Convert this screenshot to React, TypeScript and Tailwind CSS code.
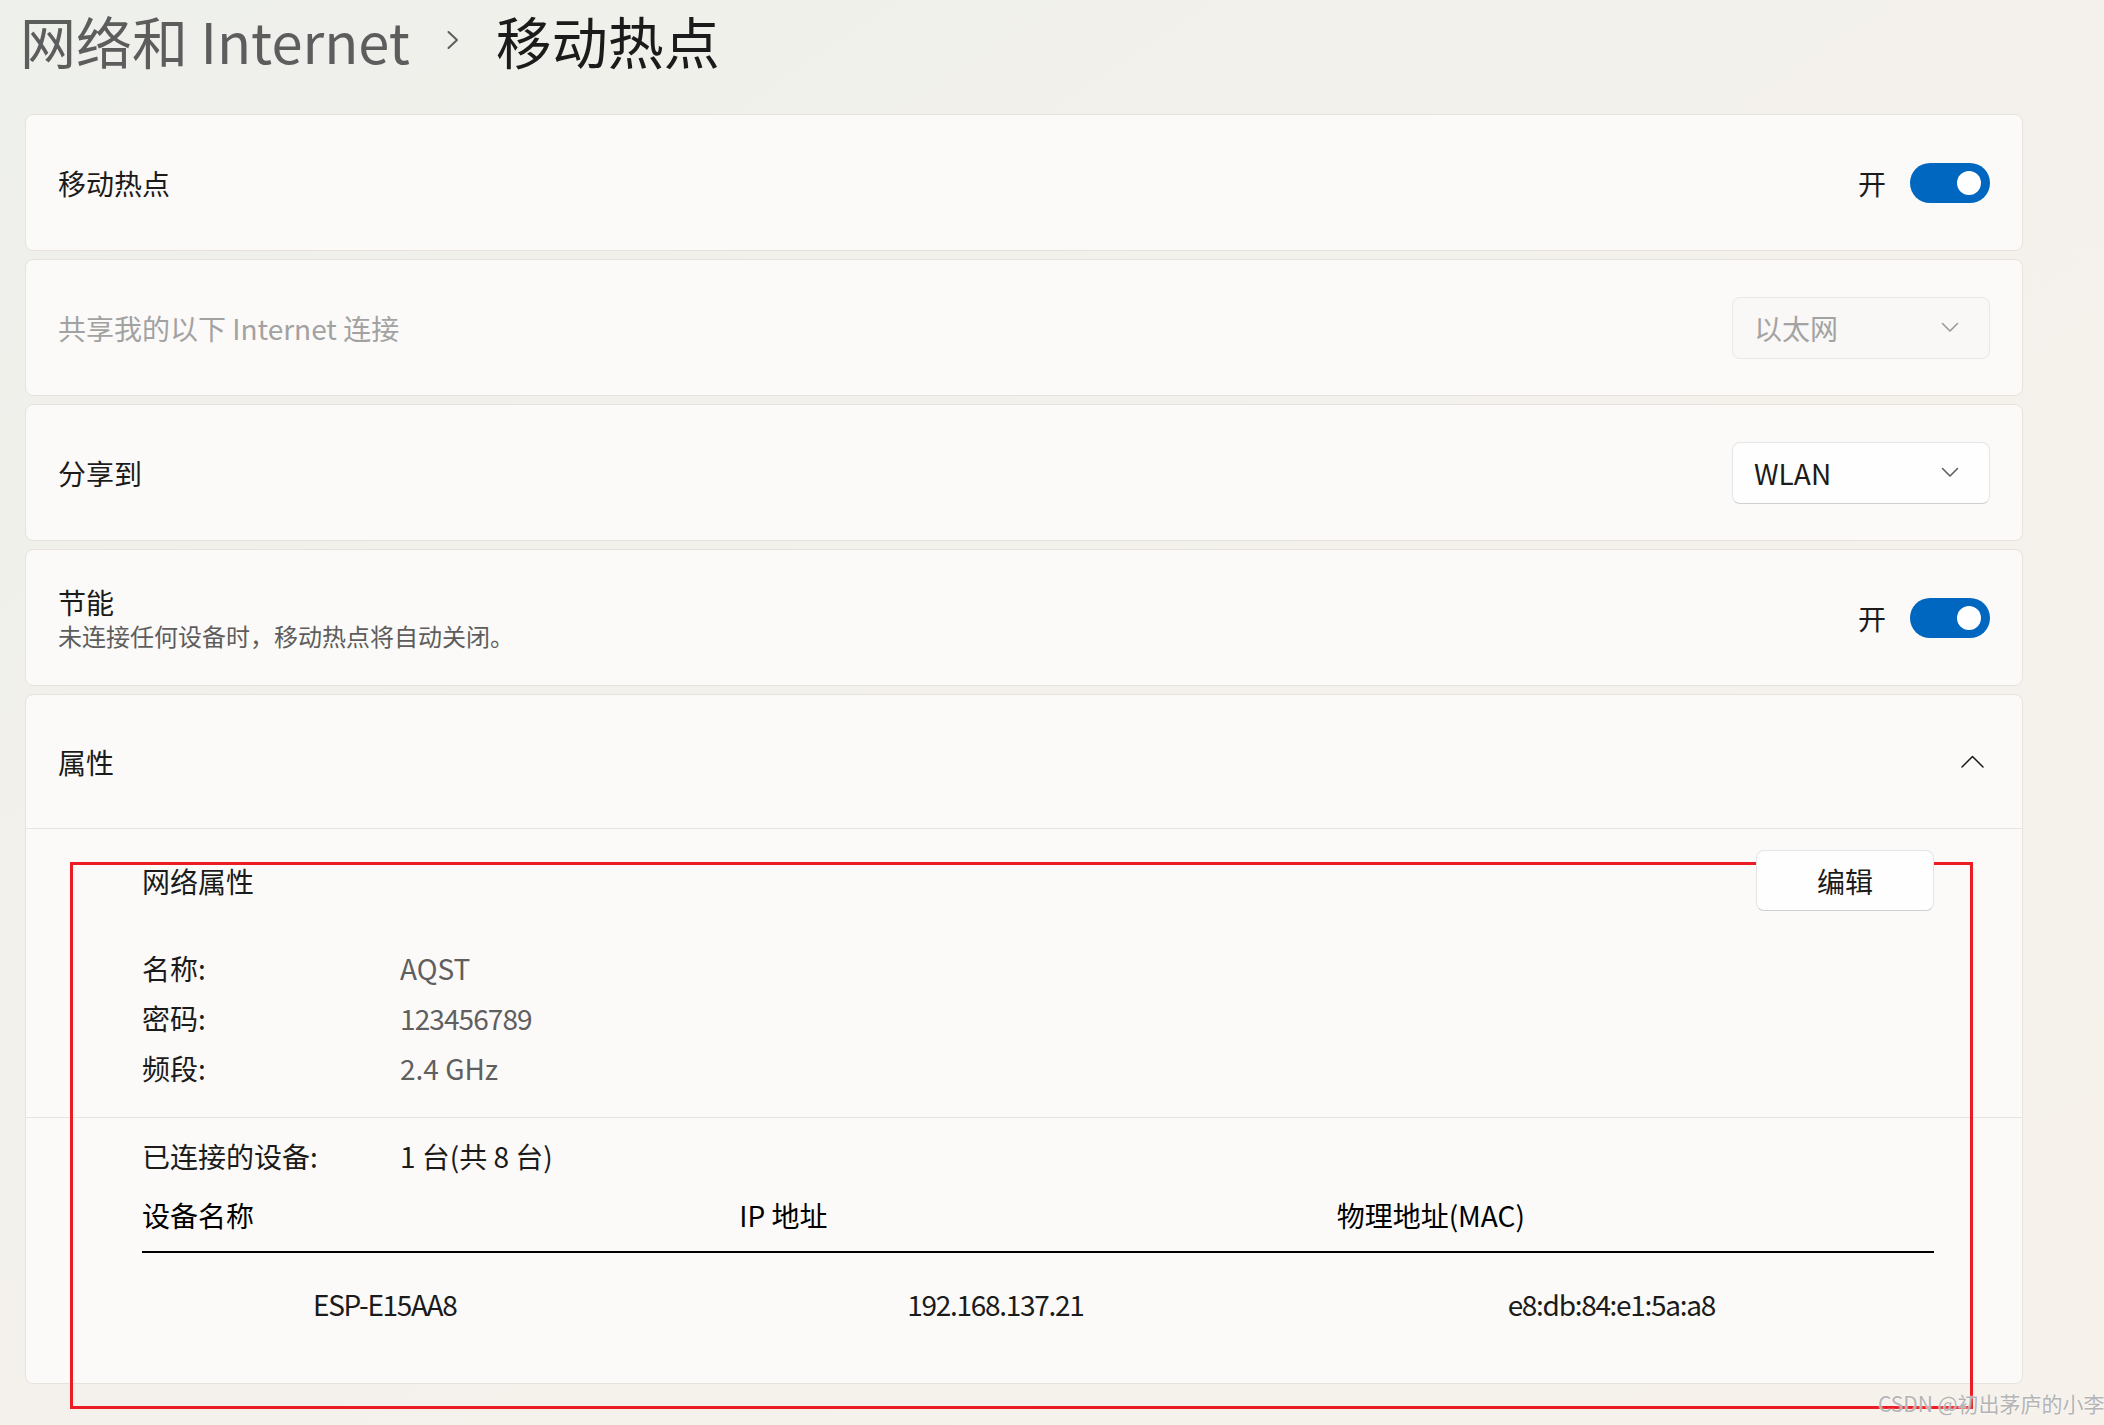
import React from "react";

function Toggle() {
  return (
    <div className="flex h-[40px] w-[80px] items-center justify-end rounded-full bg-[#0067c0] pr-[9px]">
      <div className="h-[24px] w-[24px] rounded-full bg-white" />
    </div>
  );
}

function ChevronDown({ color }: { color: string }) {
  return (
    <svg width="18" height="11" viewBox="0 0 18 11" fill="none">
      <path d="M1.5 1.5 L9 9 L16.5 1.5" stroke={color} strokeWidth="1.6" strokeLinecap="round" strokeLinejoin="round" />
    </svg>
  );
}

function ChevronUp() {
  return (
    <svg width="23" height="13" viewBox="0 0 23 13" fill="none">
      <path d="M1 12 L11.5 1.5 L22 12" stroke="#1b1b1b" strokeWidth="1.5" strokeLinecap="round" strokeLinejoin="round" />
    </svg>
  );
}

const card = "rounded-[8px] border border-[#e6e2dc] bg-[#fbfaf8]";

export default function App() {
  return (
    <div className="relative min-h-[1425px] w-full overflow-hidden bg-linear-to-br from-[#eef0eb] via-[#f4f1ec] to-[#f6f1eb] font-['Noto_Sans_CJK_SC','Noto_Sans',sans-serif] text-[#1b1b1b]">
      <div className="pl-[25px] pr-[81px]">
        {/* Title */}
        <div className="flex h-[80px] items-center">
          <span className="-ml-[5px] text-[56px] leading-none text-[#5d5d5d]">网络和 Internet</span>
          <svg className="ml-[36px]" width="14" height="20" viewBox="0 0 14 20" fill="none">
            <path d="M2.5 2 L11 10 L2.5 18" stroke="#5d5d5d" strokeWidth="2" strokeLinecap="round" strokeLinejoin="round" />
          </svg>
          <span className="ml-[36px] text-[56px] leading-none text-[#1b1b1b]">移动热点</span>
        </div>

        <div className="mt-[34px] flex flex-col gap-[8px]">
          {/* Card 1 */}
          <div className={`${card} flex h-[137px] items-center justify-between px-[32px]`}>
            <span className="text-[28px] leading-none">移动热点</span>
            <div className="flex items-center gap-[24px]">
              <span className="text-[28px] leading-none">开</span>
              <Toggle />
            </div>
          </div>

          {/* Card 2 */}
          <div className={`${card} flex h-[137px] items-center justify-between px-[32px]`}>
            <span className="text-[28px] leading-none text-[#a2a2a2]">共享我的以下 Internet 连接</span>
            <div className="flex h-[62px] w-[258px] items-center justify-between rounded-[8px] border border-[#ebe8e4] bg-[#f9f8f6] pl-[21px] pr-[30px]">
              <span className="text-[28px] leading-none text-[#a3a3a3]">以太网</span>
              <ChevronDown color="#9a9a9a" />
            </div>
          </div>

          {/* Card 3 */}
          <div className={`${card} flex h-[137px] items-center justify-between px-[32px]`}>
            <span className="text-[28px] leading-none">分享到</span>
            <div className="flex h-[62px] w-[258px] items-center justify-between rounded-[8px] border border-[#e5e5e5] border-b-[#cfcfcf] bg-[#fefefe] pl-[21px] pr-[30px]">
              <span className="text-[28px] leading-none">WLAN</span>
              <ChevronDown color="#5f5f5f" />
            </div>
          </div>

          {/* Card 4 */}
          <div className={`${card} flex h-[137px] items-center justify-between px-[32px]`}>
            <div className="flex flex-col">
              <span className="text-[28px] leading-[36px]">节能</span>
              <span className="text-[24px] leading-[32px] text-[#5d5d5d]">未连接任何设备时，移动热点将自动关闭。</span>
            </div>
            <div className="flex items-center gap-[24px]">
              <span className="text-[28px] leading-none">开</span>
              <Toggle />
            </div>
          </div>

          {/* Card 5 */}
          <div className={card}>
            <div className="flex h-[134px] items-center justify-between border-b border-[#e8e5e0] pl-[32px] pr-[38px]">
              <span className="text-[28px] leading-none">属性</span>
              <ChevronUp />
            </div>

            <div className="border-b border-[#e8e5e0] pl-[116px] pr-[88px] pt-[21px] pb-[24px]">
              <div className="flex h-[61px] items-center justify-between">
                <span className="text-[28px] leading-none">网络属性</span>
                <button className="relative z-10 h-[61px] w-[178px] rounded-[8px] border border-[#e5e5e5] border-b-[#cfcfcf] bg-[#fefefe] text-[28px] leading-none text-[#1b1b1b]">
                  编辑
                </button>
              </div>
              <div className="mt-[32px] flex flex-col">
                <div className="flex h-[50px] items-center">
                  <span className="w-[258px] text-[28px] leading-none">名称:</span>
                  <span className="text-[28px] leading-none text-[#5f5f5f]">AQST</span>
                </div>
                <div className="flex h-[50px] items-center">
                  <span className="w-[258px] text-[28px] leading-none">密码:</span>
                  <span className="text-[28px] leading-none tracking-[-0.9px] text-[#5f5f5f]">123456789</span>
                </div>
                <div className="flex h-[50px] items-center">
                  <span className="w-[258px] text-[28px] leading-none">频段:</span>
                  <span className="text-[28px] leading-none text-[#5f5f5f]">2.4 GHz</span>
                </div>
              </div>
            </div>

            <div className="pl-[116px] pr-[88px] pt-[18px] pb-[59px]">
              <div className="flex h-[40px] items-center">
                <span className="w-[258px] text-[28px] leading-none">已连接的设备:</span>
                <span className="text-[28px] leading-none">1 台(共 8 台)</span>
              </div>
              <div className="mt-[19px] grid h-[40px] grid-cols-3 items-center text-[28px] leading-none text-black">
                <span>设备名称</span>
                <span>IP 地址</span>
                <span>物理地址(MAC)</span>
              </div>
              <div className="mt-[16px] h-[2px] bg-black" />
              <div className="mt-[31px] grid h-[40px] grid-cols-3 items-center text-[28px] leading-none tracking-[-1.3px]">
                <span className="pl-[171px]">ESP-E15AA8</span>
                <span className="pl-[168px]">192.168.137.21</span>
                <span className="pl-[171px]">e8:db:84:e1:5a:a8</span>
              </div>
            </div>
          </div>
        </div>
      </div>

      {/* Red annotation box */}
      <div className="pointer-events-none absolute left-[70px] top-[862px] h-[547px] w-[1903px] border-[3px] border-[#ec1c24]" />

      {/* Watermark */}
      <div className="pointer-events-none absolute left-[1878px] top-[1393px] whitespace-nowrap text-[21px] leading-none text-[#b4b4b4] [text-shadow:0_0_2px_#ffffff]">
        CSDN @初出茅庐的小李
      </div>
    </div>
  );
}
